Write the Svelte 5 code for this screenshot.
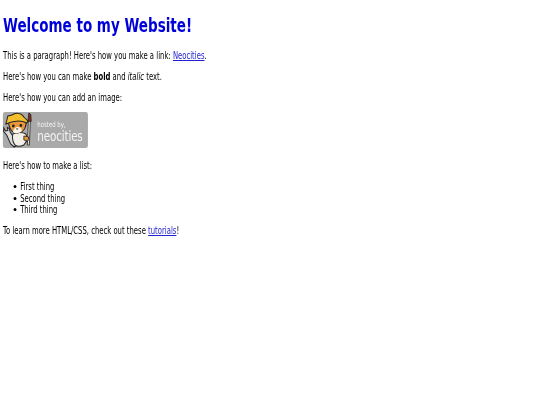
<script>
  const things = ["First thing", "Second thing", "Third thing"];
</script>

<main>
  <h1>Welcome to my Website!</h1>
  <p>This is a paragraph! Here's how you make a link: <a href="#neocities">Neocities</a>.</p>
  <p>Here's how you can make <strong>bold</strong> and <em>italic</em> text.</p>
  <p>Here's how you can add an image:</p>
  <div class="badge">
    <svg width="47" height="36" viewBox="0 0 33.600 36" preserveAspectRatio="none" aria-hidden="true">
      <!-- brush -->
      <path d="M25.500 8l2 .2-1 25-2-.2z" fill="#e6e0d2" stroke="#222" stroke-width=".8" />
      <path d="M26 1l2 1.500.3 7-3.300-.3z" fill="#8a2a20" stroke="#222" stroke-width=".8" />
      <!-- wrench -->
      <path d="M1 16l1.500 3 2.500-.5-.5-3 2 1 .8 3.500 6 9 1 4-3 2-3.500-3-4-9-3-3.500z" fill="#ddd" stroke="#222" stroke-width="1" />
      <!-- body -->
      <path d="M10 22c4-2 10-2 13 0 2 4 1 8-2 11-3 1.500-7 1.500-9 0-2-3-3-7-2-11z" fill="#f2efe6" stroke="#222" stroke-width="1" />
      <path d="M21 24l5 1-1 4-4-1z" fill="#e9973a" stroke="#222" stroke-width=".8" />
      <!-- head -->
      <path d="M6 8l1-1 15 0 1 1c1 6-1 12-8 13-6 1-10-6-9-13z" fill="#e9973a" stroke="#222" stroke-width="1" />
      <path d="M10 20c1-4 3-5 5-5s4 1 4 4c-2 2.500-7 3-9 1z" fill="#fbf5e6" />
      <!-- hat -->
      <path d="M3 12l2-8 4-1c4-3 10-2 12 2l4 4-1 2c-6-3-14-2-21 1z" fill="#f2bf2e" stroke="#222" stroke-width="1" />
      <circle cx="10.500" cy="14" r="1.400" fill="#222" />
      <circle cx="18" cy="13.500" r="1.400" fill="#222" />
      <path d="M13 16.500h2.600l-1.300 1.500z" fill="#222" />
    </svg>
    <div class="badge-text">
      <span class="hosted">hosted by,</span>
      <span class="name">neocities</span>
    </div>
  </div>
  <p>Here's how to make a list:</p>
  <ul>
    {#each things as thing}
      <li>{thing}</li>
    {/each}
  </ul>
  <p>To learn more HTML/CSS, check out these <a href="#tutorials">tutorials</a>!</p>
</main>

<style>
  :global(body) {
    margin: 0;
    background: #fff;
    overflow: hidden;
  }
  main {
    width: 745px;
    padding: 0 4.200px;
    font-family: "DejaVu Sans", sans-serif;
    font-size: 9.600px;
    line-height: 11.500px;
    color: #000;
    transform: scaleX(0.715);
    transform-origin: left top;
    filter: blur(0.25px);
  }
  h1 {
    margin: 0 0 13px;
    padding-top: 14px;
    font-size: 18.900px;
    line-height: 23px;
    color: #0000d8;
  }
  p {
    margin: 0 0 9.500px;
  }
  a {
    color: #2222d0;
  }
  .badge {
    display: flex;
    align-items: center;
    width: 119px;
    height: 36px;
    margin: -1px 0 12px;
    background: #a9a9a9;
    border-radius: 3px;
  }
  .badge-text {
    display: flex;
    flex-direction: column;
    color: #f4f4f4;
    margin-left: 1px;
    margin-top: 2px;
  }
  .hosted {
    font-size: 7.500px;
    line-height: 9px;
  }
  .name {
    font-size: 14.500px;
    line-height: 14px;
    letter-spacing: -0.2px;
  }
  ul {
    margin: 0 0 9.500px;
    padding: 0 0 0 14.500px;
    list-style: none;
  }
  li {
    display: flex;
    align-items: center;
    gap: 5.500px;
  }
  li::before {
    content: "";
    width: 4px;
    height: 3px;
    border-radius: 50%;
    background: #000;
  }
</style>
